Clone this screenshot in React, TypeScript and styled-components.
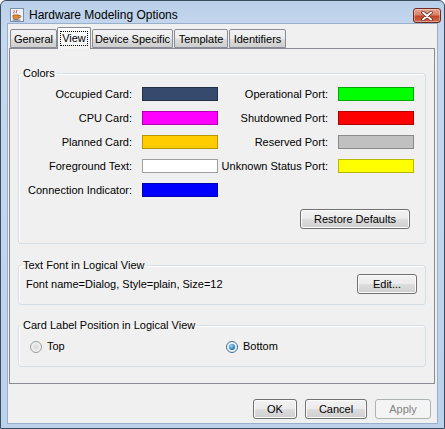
import React from 'react';
import styled, { createGlobalStyle } from 'styled-components';

const GlobalStyle = createGlobalStyle`
  html, body {
    margin: 0;
    padding: 0;
    background: #ffffff;
  }
  body {
    font-family: "Liberation Sans", Arial, sans-serif;
    font-size: 11px;
    color: #000000;
  }
`;

const Window = styled.div`
  box-sizing: border-box;
  width: 445px;
  height: 429px;
  display: flex;
  flex-direction: column;
  padding: 0 6px 4px 6px;
  border: 1px solid #3a4c60;
  border-radius: 6px 6px 0 0;
  background: linear-gradient(#b9cfe9 0px, #c6d8ee 30px, #bcd2ea 100%);
`;

const TitleBar = styled.div`
  height: 22px;
  display: flex;
  align-items: center;
  gap: 5px;
  padding-left: 3px;
`;

const TitleText = styled.span`
  flex: 1;
  font-size: 12px;
  line-height: 14px;
  margin-top: 6px;
  color: #000000;
`;

const CloseButton = styled.div`
  box-sizing: border-box;
  width: 28px;
  height: 15px;
  margin-top: 7px;
  margin-right: -3px;
  display: flex;
  align-items: center;
  justify-content: center;
  border: 1px solid #6e2c20;
  border-radius: 3px;
  background: linear-gradient(#e7a594 0%, #d9806a 45%, #c2452c 55%, #cf6a4e 100%);
  box-shadow: inset 0 0 0 1px rgba(255, 255, 255, 0.35);
`;

const Client = styled.div`
  box-sizing: border-box;
  flex: 1;
  display: flex;
  flex-direction: column;
  border: 1px solid #98b0cc;
  background: #f0f0f0;
`;

const TabStrip = styled.div`
  height: 21px;
  margin-top: 3px;
  padding-left: 2px;
  display: flex;
  align-items: flex-end;
`;

const Tab = styled.div<{ $w: number; $active?: boolean; $gap?: number }>`
  box-sizing: border-box;
  position: relative;
  z-index: ${p => (p.$active ? 2 : 1)};
  width: ${p => p.$w}px;
  height: ${p => (p.$active ? 22 : 19)}px;
  margin-left: ${p => p.$gap ?? 0}px;
  margin-bottom: ${p => (p.$active ? -1 : 0)}px;
  display: flex;
  align-items: center;
  justify-content: center;
  padding-top: ${p => (p.$active ? 0 : 1)}px;
  border: 1px solid #898c95;
  border-bottom: ${p => (p.$active ? 'none' : '1px solid #898c95')};
  border-radius: 2px 2px 0 0;
  background: ${p =>
    p.$active
      ? 'linear-gradient(#fdfdfd, #f3f3f3)'
      : 'linear-gradient(#f2f2f2 0%, #ebebeb 50%, #dddddd 51%, #cfcfcf 100%)'};
  white-space: nowrap;
`;

const FocusText = styled.span`
  outline: 1px dotted #000000;
  outline-offset: 0px;
  padding: 0 1px;
  line-height: 13px;
`;

const Panel = styled.div`
  box-sizing: border-box;
  width: 426px;
  height: 336px;
  margin-left: 1px;
  padding: 18px 8px 0 8px;
  display: flex;
  flex-direction: column;
  border: 1px solid #898c95;
  background: #f0f0f0;
`;

const Group = styled.fieldset<{ $space?: number }>`
  margin: ${p => p.$space ?? 0}px 0 0 0;
  padding: 0;
  min-width: 0;
  border: 1px solid #d5dfe5;
  border-radius: 3px;
  box-shadow: inset 1px 1px 0 #ffffff;
`;

const GroupTitle = styled.legend`
  margin-left: 2px;
  padding: 0 2px;
  font-size: 11px;
  line-height: 13px;
`;

const ColorGrid = styled.div`
  margin-top: 7px;
  display: grid;
  grid-template-columns: 113px 76px 100px 76px;
  grid-auto-rows: 14px;
  column-gap: 10px;
  row-gap: 10px;
  align-items: center;
`;

const ColorLabel = styled.span`
  justify-self: end;
  white-space: nowrap;
  line-height: 13px;
`;

const Swatch = styled.div<{ $fill: string; $edge: string }>`
  box-sizing: border-box;
  width: 76px;
  height: 14px;
  background: ${p => p.$fill};
  border: 1px solid ${p => p.$edge};
`;

const RestoreRow = styled.div`
  margin: 12px 0 14px 0;
  padding-right: 15px;
  display: flex;
  justify-content: flex-end;
`;

const Button = styled.button<{ $w: number }>`
  box-sizing: border-box;
  width: ${p => p.$w}px;
  height: 20px;
  padding: 0;
  font-family: "Liberation Sans", Arial, sans-serif;
  font-size: 11px;
  color: #000000;
  border: 1px solid #707070;
  border-radius: 3px;
  background: linear-gradient(#f2f2f2 0%, #ebebeb 50%, #dddddd 51%, #cfcfcf 100%);
  box-shadow: inset 0 0 0 1px #fcfcfc;

  &:disabled {
    color: #838383;
    border-color: #adb2b5;
    background: #f4f4f4;
    box-shadow: none;
  }
`;

const FontRow = styled.div`
  margin: 2px 0 10px 0;
  padding: 0 8px 0 7px;
  display: flex;
  align-items: center;
  justify-content: space-between;
`;

const RadioRow = styled.div`
  margin: 8px 0 13px 0;
  padding-left: 11px;
  display: grid;
  grid-template-columns: 196px 1fr;
  align-items: center;
`;

const RadioOption = styled.label`
  display: flex;
  align-items: center;
  gap: 5px;
  line-height: 13px;
`;

const RadioDot = styled.span<{ $checked?: boolean }>`
  box-sizing: border-box;
  width: 12px;
  height: 12px;
  border-radius: 50%;
  display: flex;
  align-items: center;
  justify-content: center;
  border: 1px solid ${p => (p.$checked ? '#3d6f99' : '#9a9b9b')};
  background: radial-gradient(circle at 50% 50%, #d9d9d9 0%, #ececec 55%, #ffffff 100%);

  &::after {
    content: '';
    display: ${p => (p.$checked ? 'block' : 'none')};
    width: 6px;
    height: 6px;
    border-radius: 50%;
    background: radial-gradient(circle at 40% 35%, #9fdcfa 0%, #3b8dc7 50%, #154f7f 100%);
  }
`;

const ButtonRow = styled.div`
  margin-top: 15px;
  padding-right: 6px;
  display: flex;
  justify-content: flex-end;
  gap: 8px;
`;

const JavaIcon = () => (
  <svg width="14" height="14" viewBox="0 0 14 14" style={{ marginTop: 6 }}>
    <rect x="0.5" y="0.5" width="13" height="13" fill="#eef2f8" stroke="#7d8ea6" />
    <path d="M4 2.5c1 1-1 1.5 0 3M6.5 2c1 1-1 1.8 0 3.3" stroke="#d0402a" strokeWidth="1" fill="none" />
    <path d="M3 7h6v2.5c0 1.2-1 2-2 2H5c-1 0-2-.8-2-2z" fill="#e58a2c" stroke="#8a4a12" strokeWidth="0.6" />
    <path d="M9 7.6h1.2c.9 0 .9 1.8 0 1.8H9" stroke="#8a4a12" strokeWidth="0.8" fill="none" />
    <rect x="2.5" y="11.6" width="8" height="1" fill="#5b79a8" />
  </svg>
);

const CloseGlyph = () => (
  <svg width="12" height="10" viewBox="0 0 12 10">
    <path d="M2 1.5l8 7M10 1.5l-8 7" stroke="#5a1f14" strokeWidth="3.4" strokeLinecap="round" />
    <path d="M2 1.5l8 7M10 1.5l-8 7" stroke="#ffffff" strokeWidth="2" strokeLinecap="round" />
  </svg>
);

const colorRows = [
  ['Occupied Card:', '#364a6d', '#232f45', 'Operational Port:', '#00ff00', '#00a800'],
  ['CPU Card:', '#ff00ff', '#b000b0', 'Shutdowned Port:', '#ff0000', '#b00000'],
  ['Planned Card:', '#ffcc00', '#b89400', 'Reserved Port:', '#c0c0c0', '#8a8a8a'],
  ['Foreground Text:', '#ffffff', '#a0a0a0', 'Unknown Status Port:', '#ffff00', '#b8b800'],
  ['Connection Indicator:', '#0000ff', '#0000b0'],
];

const tabs = [
  { name: 'General', w: 47, gap: 0 },
  { name: 'View', w: 34, gap: 0, active: true },
  { name: 'Device Specific', w: 81, gap: 1 },
  { name: 'Template', w: 54, gap: 1 },
  { name: 'Identifiers', w: 57, gap: 1 },
];

export default function App() {
  return (
    <>
      <GlobalStyle />
      <Window>
        <TitleBar>
          <JavaIcon />
          <TitleText>Hardware Modeling Options</TitleText>
          <CloseButton>
            <CloseGlyph />
          </CloseButton>
        </TitleBar>
        <Client>
          <TabStrip>
            {tabs.map(t => (
              <Tab key={t.name} $w={t.w} $gap={t.gap} $active={t.active}>
                {t.active ? <FocusText>{t.name}</FocusText> : t.name}
              </Tab>
            ))}
          </TabStrip>
          <Panel>
            <Group>
              <GroupTitle>Colors</GroupTitle>
              <ColorGrid>
                {colorRows.map(row => (
                  <React.Fragment key={row[0]}>
                    <ColorLabel>{row[0]}</ColorLabel>
                    <Swatch $fill={row[1]} $edge={row[2]} />
                    {row[3] ? (
                      <>
                        <ColorLabel>{row[3]}</ColorLabel>
                        <Swatch $fill={row[4]} $edge={row[5]} />
                      </>
                    ) : null}
                  </React.Fragment>
                ))}
              </ColorGrid>
              <RestoreRow>
                <Button $w={110}>Restore Defaults</Button>
              </RestoreRow>
            </Group>
            <Group $space={15}>
              <GroupTitle>Text Font in Logical View</GroupTitle>
              <FontRow>
                <span>Font name=Dialog, Style=plain, Size=12</span>
                <Button $w={60}>Edit...</Button>
              </FontRow>
            </Group>
            <Group $space={14}>
              <GroupTitle>Card Label Position in Logical View</GroupTitle>
              <RadioRow>
                <RadioOption>
                  <RadioDot />
                  Top
                </RadioOption>
                <RadioOption>
                  <RadioDot $checked />
                  Bottom
                </RadioOption>
              </RadioRow>
            </Group>
          </Panel>
          <ButtonRow>
            <Button $w={44}>OK</Button>
            <Button $w={62}>Cancel</Button>
            <Button $w={56} disabled>
              Apply
            </Button>
          </ButtonRow>
        </Client>
      </Window>
    </>
  );
}
